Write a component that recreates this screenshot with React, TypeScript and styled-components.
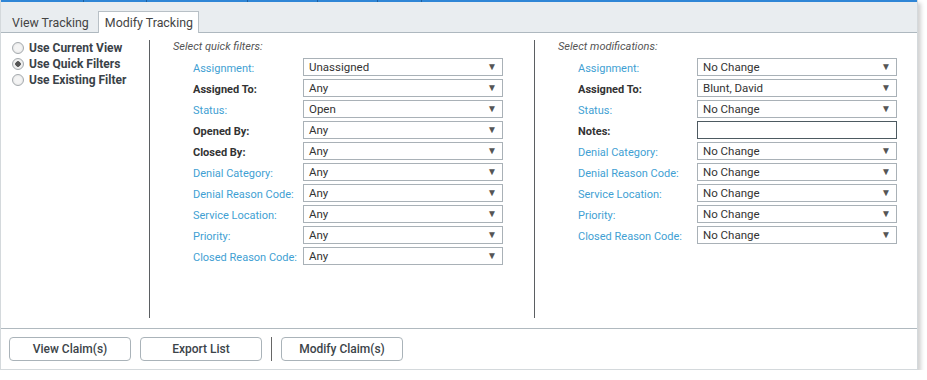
import styled, { createGlobalStyle } from 'styled-components';

const GlobalStyle = createGlobalStyle`
  html, body {
    margin: 0;
    padding: 0;
    background: #ffffff;
    font-family: Roboto, "Liberation Sans", Arial, sans-serif;
    font-size: 12px;
    color: #333;
  }
`;

type Row = { label: string; value?: string; strong?: boolean; text?: boolean };

const quickFilters: Row[] = [
  { label: 'Assignment:', value: 'Unassigned' },
  { label: 'Assigned To:', value: 'Any', strong: true },
  { label: 'Status:', value: 'Open' },
  { label: 'Opened By:', value: 'Any', strong: true },
  { label: 'Closed By:', value: 'Any', strong: true },
  { label: 'Denial Category:', value: 'Any' },
  { label: 'Denial Reason Code:', value: 'Any' },
  { label: 'Service Location:', value: 'Any' },
  { label: 'Priority:', value: 'Any' },
  { label: 'Closed Reason Code:', value: 'Any' },
];

const modifications: Row[] = [
  { label: 'Assignment:', value: 'No Change' },
  { label: 'Assigned To:', value: 'Blunt, David', strong: true },
  { label: 'Status:', value: 'No Change' },
  { label: 'Notes:', strong: true, text: true },
  { label: 'Denial Category:', value: 'No Change' },
  { label: 'Denial Reason Code:', value: 'No Change' },
  { label: 'Service Location:', value: 'No Change' },
  { label: 'Priority:', value: 'No Change' },
  { label: 'Closed Reason Code:', value: 'No Change' },
];

// leftover ticks from the nav strip above the panel
const navSegments = [82, 62, 100, 69, 59, 43, 502];

const radios = [
  { label: 'Use Current View', checked: false },
  { label: 'Use Quick Filters', checked: true },
  { label: 'Use Existing Filter', checked: false },
];

export default function App() {
  return (
    <>
      <GlobalStyle />
      <Panel>
        <NavStrip>
          {navSegments.map((w, i) => (
            <NavSegment key={i} $width={w} />
          ))}
        </NavStrip>
        <TabBar>
          <Tab>View Tracking</Tab>
          <Tab $active>Modify Tracking</Tab>
        </TabBar>
        <Body>
          <ModeColumn>
            {radios.map((r) => (
              <RadioRow key={r.label}>
                <RadioDot $checked={r.checked} />
                {r.label}
              </RadioRow>
            ))}
          </ModeColumn>
          <Section $width={385}>
            <SectionTitle>Select quick filters:</SectionTitle>
            <FieldList>
              {quickFilters.map((row) => (
                <FieldRow key={row.label} $labelWidth={110}>
                  <FieldLabel $strong={row.strong}>{row.label}</FieldLabel>
                  <SelectBox>
                    {row.value}
                    <Caret>▼</Caret>
                  </SelectBox>
                </FieldRow>
              ))}
            </FieldList>
          </Section>
          <Section $width={382} $last>
            <SectionTitle>Select modifications:</SectionTitle>
            <FieldList>
              {modifications.map((row) => (
                <FieldRow key={row.label} $labelWidth={119}>
                  <FieldLabel $strong={row.strong}>{row.label}</FieldLabel>
                  {row.text ? (
                    <TextBox />
                  ) : (
                    <SelectBox>
                      {row.value}
                      <Caret>▼</Caret>
                    </SelectBox>
                  )}
                </FieldRow>
              ))}
            </FieldList>
          </Section>
        </Body>
        <Footer>
          <Button>View Claim(s)</Button>
          <Button>Export List</Button>
          <ButtonDivider />
          <Button>Modify Claim(s)</Button>
        </Footer>
      </Panel>
    </>
  );
}

const Panel = styled.div`
  width: 916px;
  border-left: 1px solid #d4d9dc;
  border-right: 1px solid #d4d9dc;
  border-bottom: 1px solid #d4d9dc;
  background: #fff;
  box-shadow: 3px 3px 4px rgba(0, 0, 0, 0.18);
`;

const NavStrip = styled.div`
  display: flex;
  height: 2px;
  background: #2f86d6;
`;

const NavSegment = styled.div<{ $width: number }>`
  width: ${(p) => p.$width}px;
  flex: none;
  border-right: 1px solid #1d5f9e;
  &:last-child {
    flex: 1;
    border-right: none;
  }
`;

const TabBar = styled.div`
  display: flex;
  align-items: flex-end;
  gap: 2px;
  height: 30px;
  padding-left: 3px;
  background: #e9edf0;
  border-bottom: 1px solid #aeb8bf;
`;

const Tab = styled.div<{ $active?: boolean }>`
  height: 21px;
  line-height: 21px;
  padding: 0 ${(p) => (p.$active ? 5 : 6)}px 0 ${(p) => (p.$active ? 6 : 7)}px;
  margin-bottom: -1px;
  font-size: 12.4px;
  color: #444;
  background: ${(p) => (p.$active ? '#fff' : 'transparent')};
  border: 1px solid ${(p) => (p.$active ? '#b8c0c6' : 'transparent')};
  border-bottom: none;
`;

const Body = styled.div`
  display: flex;
  height: 295px;
  border-bottom: 1px solid #b0b9bf;
`;

const ModeColumn = styled.div`
  width: 137px;
  padding: 7px 0 0 11px;
  display: flex;
  flex-direction: column;
`;

const RadioRow = styled.div`
  display: flex;
  align-items: center;
  gap: 5px;
  height: 16px;
  font-size: 12px;
  font-weight: 700;
  color: #3a4248;
`;

const RadioDot = styled.span<{ $checked: boolean }>`
  width: 10px;
  height: 10px;
  border-radius: 50%;
  border: 1px solid #a5aaae;
  background: radial-gradient(circle, ${(p) => (p.$checked ? '#555 0 2.5px,' : '')} #f4f4f4 3px, #dcdcdc 100%);
  flex: none;
`;

const Section = styled.div<{ $width: number; $last?: boolean }>`
  width: ${(p) => p.$width}px;
  margin: 7px 0 10px;
  border-left: 1px solid #5b5f62;
  padding-left: 23px;
  box-sizing: border-box;
  ${(p) => (p.$last ? 'flex: 1;' : '')}
`;

const SectionTitle = styled.div`
  font-style: italic;
  font-size: 11px;
  color: #555;
  height: 18px;
  line-height: 14px;
`;

const FieldList = styled.div`
  display: flex;
  flex-direction: column;
  gap: 3px;
  padding-left: 20px;
`;

const FieldRow = styled.div<{ $labelWidth: number }>`
  display: grid;
  grid-template-columns: ${(p) => p.$labelWidth}px 200px;
  align-items: center;
  height: 18px;
`;

const FieldLabel = styled.span<{ $strong?: boolean }>`
  font-size: 11px;
  color: ${(p) => (p.$strong ? '#333' : '#3f9fd3')};
  font-weight: ${(p) => (p.$strong ? 700 : 400)};
  padding-top: 2px;
`;

const SelectBox = styled.div`
  position: relative;
  height: 18px;
  box-sizing: border-box;
  border: 1px solid #a9b1b7;
  padding-left: 5px;
  font-size: 11.5px;
  line-height: 16px;
  color: #333;
  background: #fff;
`;

const Caret = styled.span`
  position: absolute;
  right: 5px;
  top: 0;
  font-size: 10px;
  color: #555;
`;

const TextBox = styled.div`
  height: 18px;
  box-sizing: border-box;
  border: 1px solid #4d5a61;
  background: #fff;
`;

const Footer = styled.div`
  display: flex;
  align-items: center;
  gap: 9px;
  height: 40px;
  padding-left: 8px;
`;

const Button = styled.button`
  width: 122px;
  height: 24px;
  border: 1px solid #aab3b9;
  border-radius: 4px;
  background: #fff;
  font-family: Roboto, "Liberation Sans", Arial, sans-serif;
  font-size: 12px;
  font-weight: 500;
  color: #3c4449;
  padding: 0;
`;

const ButtonDivider = styled.div`
  width: 1px;
  height: 24px;
  background: #666;
`;
